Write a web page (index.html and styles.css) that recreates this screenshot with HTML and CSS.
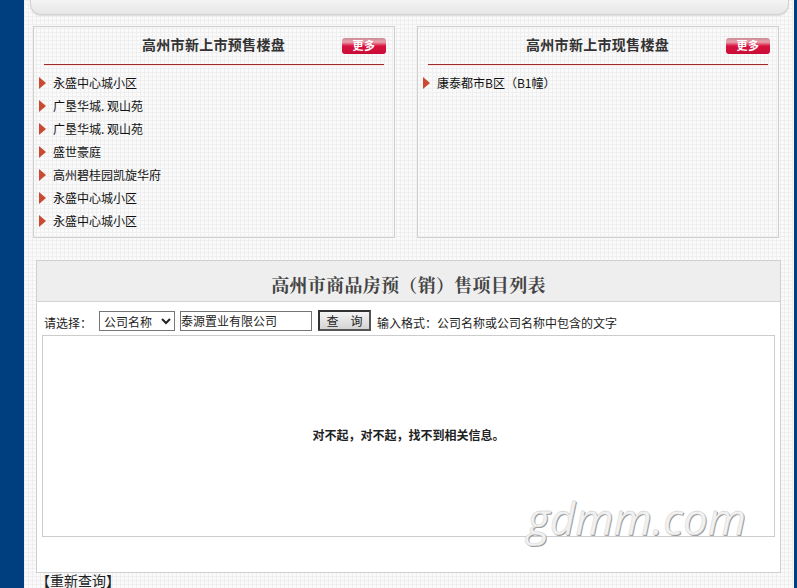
FILE: index.html
```html
<!DOCTYPE html>
<html lang="zh">
<head>
<meta charset="utf-8">
<title>高州市商品房预（销）售项目列表</title>
<link rel="stylesheet" href="styles.css">
</head>
<body>
<div class="page">
  <main class="main">
    <div class="topbar"></div>
    <div class="panels">
      <section class="panel">
        <header class="panel-head">
          <h2 class="panel-title">高州市新上市预售楼盘</h2>
          <a class="more">更多</a>
        </header>
        <ul class="list">
          <li>永盛中心城小区</li>
          <li>广垦华城. 观山苑</li>
          <li>广垦华城. 观山苑</li>
          <li>盛世豪庭</li>
          <li>高州碧桂园凯旋华府</li>
          <li>永盛中心城小区</li>
          <li>永盛中心城小区</li>
        </ul>
      </section>
      <section class="panel">
        <header class="panel-head">
          <h2 class="panel-title">高州市新上市现售楼盘</h2>
          <a class="more">更多</a>
        </header>
        <ul class="list">
          <li>康泰都市B区（B1幢）</li>
        </ul>
      </section>
    </div>
    <section class="results">
      <h1 class="results-title">高州市商品房预（销）售项目列表</h1>
      <form class="search">
        <label class="search-label">请选择：</label>
        <select class="search-select"><option>公司名称</option></select>
        <input class="search-input" type="text" value="泰源置业有限公司">
        <button class="search-btn" type="button">查　询</button>
        <span class="search-hint">输入格式：公司名称或公司名称中包含的文字</span>
      </form>
      <div class="result-box">对不起，对不起，找不到相关信息。</div>
    </section>
    <a class="requery">【重新查询】</a>
  </main>
  <div class="side-right"></div>
</div>
<div class="watermark">gdmm.com</div>
</body>
</html>
```
FILE: styles.css
```css
* { box-sizing: border-box; }
html, body { margin: 0; padding: 0; height: 100%; overflow: hidden; }
body {
  font-family: "Noto Sans CJK SC", "Liberation Sans", sans-serif;
  font-size: 12px;
  color: #222;
  position: relative;
}
.page {
  height: 588px;
  padding-left: 24px;
  background: #003f7f;
  display: flex;
}
.main {
  width: 770px;
  height: 588px;
  flex: none;
  padding: 0 6px;
  background-color: #fafafa;
  background-image:
    linear-gradient(#efefef 1px, transparent 1px),
    linear-gradient(90deg, #efefef 1px, transparent 1px);
  background-size: 4px 4px;
}
.topbar {
  height: 16px;
  margin-top: -1px;
  width: 759px;
  background: linear-gradient(#f5f5f5, #e6e6e6);
  border: 1px solid #d2d2d2;
  border-top: 0;
  border-radius: 0 0 11px 11px;
  box-shadow: 0 1px 1px #ddd;
}
.panels {
  display: flex;
  gap: 22px;
  margin: 11px 0 0 3px;
}
.panel {
  width: 362px;
  height: 212px;
  border: 1px solid #cfcfcf;
  padding: 0 10px;
}
.panel-head {
  position: relative;
  height: 38px;
  padding-bottom: 4px;
  border-bottom: 1px solid #a02a2a;
  box-shadow: 0 1px 0 #fde4e4;
  display: flex;
  justify-content: center;
  align-items: center;
}
.panel-title {
  margin: 0 0 0 -1px;
  font-size: 14px;
  font-weight: 700;
  letter-spacing: .3px;
  line-height: 20px;
  color: #333;
}
.more {
  position: absolute;
  right: -2px;
  top: 11px;
  width: 44px;
  height: 16px;
  border-radius: 3px;
  background: linear-gradient(#c98a93 0, #e8a3ad 25%, #d8123f 50%, #c80c36 100%);
  color: #fff;
  font-size: 11px;
  font-weight: 700;
  line-height: 15px;
  text-align: center;
  letter-spacing: .5px;
}
.list {
  list-style: none;
  margin: 6px 0 0 -10px;
  padding: 0;
}
.list li {
  position: relative;
  height: 23px;
  line-height: 23px;
  padding-left: 19px;
  color: #111;
  white-space: nowrap;
}
.list li::before {
  content: "";
  position: absolute;
  left: 5px;
  top: 6px;
  border-left: 7px solid #c84b31;
  border-top: 6px solid transparent;
  border-bottom: 6px solid transparent;
}
.results {
  width: 745px;
  height: 313px;
  margin: 22px 0 0 6px;
  background: #fff;
  border: 1px solid #d0d0d0;
  padding-bottom: 36px;
  display: flex;
  flex-direction: column;
}
.results-title {
  margin: 0;
  height: 41px;
  flex: none;
  background: #eee;
  border-bottom: 1px solid #d4d4d4;
  font-size: 18px;
  font-weight: 700;
  letter-spacing: .3px;
  line-height: 47px;
  text-align: center;
  color: #444;
  font-family: "Noto Serif CJK SC", "Noto Sans CJK SC", serif;
}
.search {
  height: 33px;
  flex: none;
  display: flex;
  align-items: flex-start;
  padding: 8px 0 0 7px;
}
.search-label { margin-top: 4px; width: 55px; color: #222; }
.search-select {
  width: 76px;
  height: 20px;
  margin-top: 1px;
  font: 12px "Noto Sans CJK SC", sans-serif;
  color: #222;
  background: #fff;
  border: 1px solid #767676;
  border-radius: 0;
  padding: 0 0 2px;
}
.search-input {
  width: 132px;
  height: 20px;
  margin: 1px 0 0 5px;
  font: 12px "Noto Sans CJK SC", sans-serif;
  color: #222;
  border: 1px solid #767676;
  padding: 0 0 1px;
  outline: 0;
}
.search-btn {
  width: 53px;
  height: 21px;
  margin-left: 6px;
  padding: 0;
  font: 12px/17px "Noto Sans CJK SC", sans-serif;
  color: #222;
  background: linear-gradient(#f4f4f4, #d4d4d4);
  border: 2px solid;
  border-color: #333 #555 #555 #333;
}
.search-hint { margin: 4px 0 0 6px; color: #222; white-space: nowrap; }
.result-box {
  width: 733px;
  height: 202px;
  margin-left: 5px;
  flex: none;
  border: 1px solid #ccc;
  display: flex;
  align-items: center;
  justify-content: center;
  font-weight: 700;
  color: #222;
  line-height: 1;
  padding-bottom: 2px;
}
.requery {
  display: block;
  margin: 0 0 0 6px;
  font-size: 14px;
  line-height: 14px;
  color: #222;
}
.side-right {
  flex: 1;
  background: #003f7f;
}
.watermark {
  position: absolute;
  left: 527px;
  top: 488px;
  font-family: "Open Sans", "Liberation Sans", sans-serif;
  font-style: italic;
  font-weight: 400;
  font-size: 44px;
  line-height: 60px;
  color: #f1f1f1;
  -webkit-text-stroke: .3px #c4c4c4;
  text-shadow: 1px 1px 0 #9a9a9a;
  white-space: nowrap;
}
```
